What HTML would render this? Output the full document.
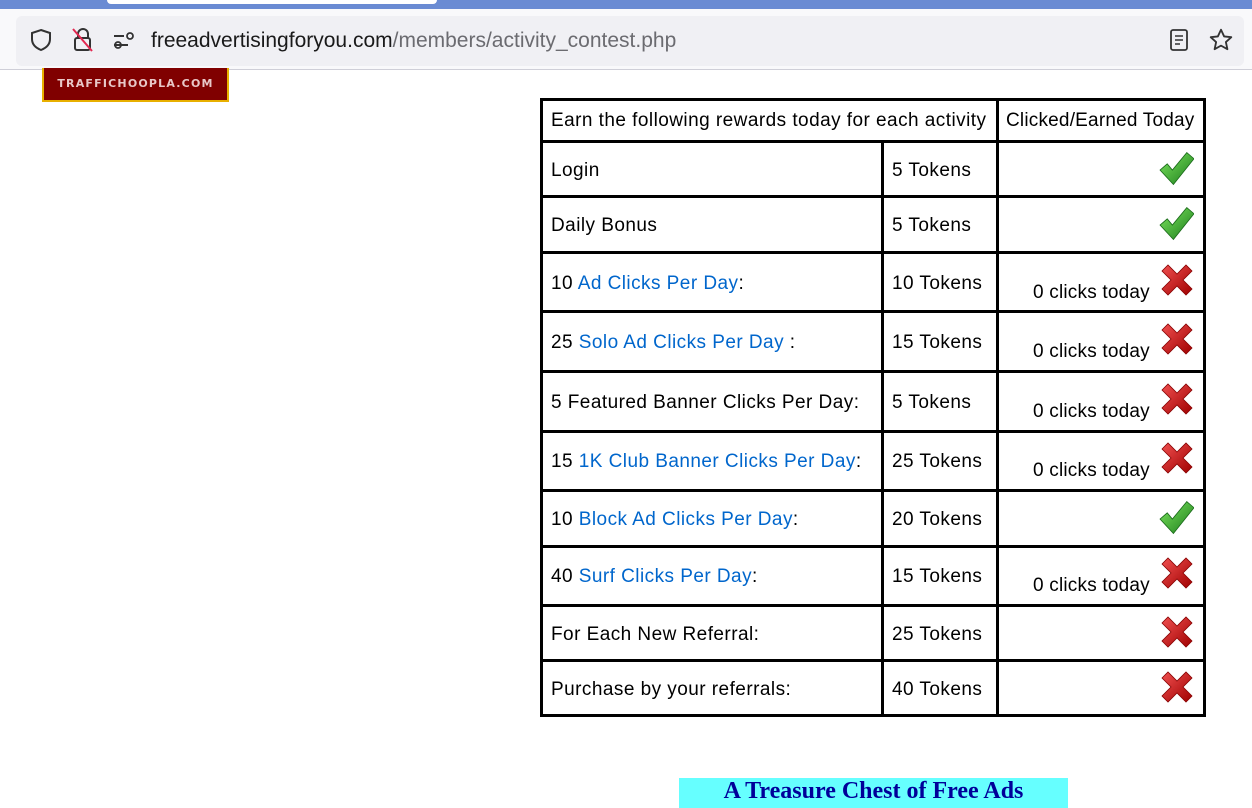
<!DOCTYPE html><html><head><style>
body{margin:0;width:1252px;height:798px;overflow:hidden;background:#fff;font-family:"Liberation Sans",sans-serif;position:relative}
.a{position:absolute}
.t{position:absolute;font-size:19px;color:#000;white-space:nowrap;letter-spacing:0.45px}
.l{color:#0066cc}
.h{position:absolute;background:#000;height:3px;left:540px;width:666px}
.v{position:absolute;background:#000;width:3px}
</style></head><body>
<div class="a" style="left:0;top:0;width:1252px;height:9px;background:#6a8bd3"></div>
<div class="a" style="left:107px;top:0;width:330px;height:4px;background:#fff;border-radius:0 0 4px 4px"></div>
<div class="a" style="left:0;top:9px;width:1252px;height:60px;background:#f9f9fb"></div>
<div class="a" style="left:16px;top:16px;width:1228px;height:50px;background:#f0f0f4;border-radius:6px"></div>
<div class="a" style="left:0;top:69px;width:1252px;height:1px;background:#cfcfd8"></div>
<svg class="a" style="left:28px;top:27px" width="26" height="26" viewBox="0 0 26 26"><path d="M13 3 L22 6 V12 C22 18 18 21 13 23 C8 21 4 18 4 12 V6 Z" fill="none" stroke="#333" stroke-width="2"/></svg>
<svg class="a" style="left:70px;top:26px" width="26" height="28" viewBox="0 0 26 28"><rect x="5" y="12" width="15" height="12" rx="2" fill="none" stroke="#333" stroke-width="2"/><path d="M8 12V8a5 5 0 0 1 10 0v4" fill="none" stroke="#333" stroke-width="2"/><path d="M3 3 L22 25" stroke="#e22850" stroke-width="2"/></svg>
<svg class="a" style="left:112px;top:30px" width="26" height="20" viewBox="0 0 26 20"><path d="M2 6h10M2 15h14" stroke="#333" stroke-width="2"/><circle cx="18" cy="6" r="3" fill="none" stroke="#333" stroke-width="1.8"/><circle cx="6" cy="15" r="3" fill="none" stroke="#333" stroke-width="1.8"/></svg>
<div class="a" style="left:151px;top:29px;font-size:21px;color:#1a1a1a">freeadvertisingforyou.com<span style="color:#6b6b70">/members/activity_contest.php</span></div>
<svg class="a" style="left:1167px;top:28px" width="24" height="24" viewBox="0 0 24 24"><rect x="4" y="2" width="16" height="20" rx="2" fill="none" stroke="#333" stroke-width="1.8"/><path d="M8 8h8M8 12h8M8 16h5" stroke="#333" stroke-width="1.6"/></svg>
<svg class="a" style="left:1208px;top:27px" width="26" height="26" viewBox="0 0 24 24"><path d="M12 2.5l2.9 6.2 6.6.7-5 4.5 1.4 6.6L12 17.2 6.1 20.5l1.4-6.6-5-4.5 6.6-.7z" fill="none" stroke="#333" stroke-width="1.7" stroke-linejoin="round"/></svg>
<div class="a" style="left:42px;top:68px;width:183px;height:32px;background:#800000;border:2px solid #e8b000;border-top:none"></div>
<div class="a" style="left:42px;top:77px;width:187px;text-align:center;color:#e8c8c8;font-family:'DejaVu Sans',sans-serif;font-weight:bold;font-size:11px;letter-spacing:1.2px">TRAFFICHOOPLA.COM</div>

<div class="h" style="top:98px"></div><div class="h" style="top:140px"></div><div class="h" style="top:195px"></div><div class="h" style="top:251px"></div><div class="h" style="top:310px"></div><div class="h" style="top:370px"></div><div class="h" style="top:430px"></div><div class="h" style="top:489px"></div><div class="h" style="top:545px"></div><div class="h" style="top:604px"></div><div class="h" style="top:659px"></div><div class="h" style="top:714px"></div>
<div class="v" style="left:540px;top:98px;height:619px"></div><div class="v" style="left:1203px;top:98px;height:619px"></div>
<div class="v" style="left:996px;top:98px;height:619px"></div><div class="v" style="left:881px;top:140px;height:577px"></div>

<div class="t" style="left:551px;top:110px">Earn the following rewards today for each activity</div>
<div class="t" style="left:1006px;top:110px;letter-spacing:0.2px">Clicked/Earned Today</div>

<svg width="0" height="0" style="position:absolute"><defs>
<linearGradient id="g" x1="0" y1="0" x2="1" y2="1"><stop offset="0" stop-color="#7fe860"/><stop offset="1" stop-color="#1a7a1a"/></linearGradient>
<linearGradient id="r" x1="0" y1="0" x2="1" y2="1"><stop offset="0" stop-color="#f05050"/><stop offset="1" stop-color="#a00000"/></linearGradient>
<symbol id="ck" viewBox="0 0 34 34"><path d="M1 19 L8 13 L13 19 L27 2 L34 8 L14 33 Z" fill="url(#g)" stroke="#1a6a1a" stroke-width="0.8"/></symbol>
<symbol id="x" viewBox="0 0 34 34"><path d="M2 8 L8 2 L17 11 L26 2 L32 8 L23 17 L32 26 L26 32 L17 23 L8 32 L2 26 L11 17 Z" fill="url(#r)" stroke="#800" stroke-width="0.8"/></symbol>
</defs></svg>

<div class="t" style="left:551px;top:160px">Login</div><div class="t" style="left:892px;top:160px">5 Tokens</div>
<svg class="a" style="left:1159px;top:150px" width="35" height="36"><use href="#ck"/></svg>
<div class="t" style="left:551px;top:215px">Daily Bonus</div><div class="t" style="left:892px;top:215px">5 Tokens</div>
<svg class="a" style="left:1159px;top:205px" width="35" height="36"><use href="#ck"/></svg>

<div class="t" style="left:551px;top:273px">10 <span class="l">Ad Clicks Per Day</span>:</div><div class="t" style="left:892px;top:273px">10 Tokens</div>
<div class="t" style="left:1033px;top:282px;letter-spacing:0.2px">0 clicks today</div><svg class="a" style="left:1160px;top:263px" width="34" height="34"><use href="#x"/></svg>

<div class="t" style="left:551px;top:332px">25 <span class="l">Solo Ad Clicks Per Day</span> :</div><div class="t" style="left:892px;top:332px">15 Tokens</div>
<div class="t" style="left:1033px;top:341px;letter-spacing:0.2px">0 clicks today</div><svg class="a" style="left:1160px;top:322px" width="34" height="34"><use href="#x"/></svg>

<div class="t" style="left:551px;top:392px">5 Featured Banner Clicks Per Day:</div><div class="t" style="left:892px;top:392px">5 Tokens</div>
<div class="t" style="left:1033px;top:401px;letter-spacing:0.2px">0 clicks today</div><svg class="a" style="left:1160px;top:382px" width="34" height="34"><use href="#x"/></svg>

<div class="t" style="left:551px;top:451px">15 <span class="l">1K Club Banner Clicks Per Day</span>:</div><div class="t" style="left:892px;top:451px">25 Tokens</div>
<div class="t" style="left:1033px;top:460px;letter-spacing:0.2px">0 clicks today</div><svg class="a" style="left:1160px;top:441px" width="34" height="34"><use href="#x"/></svg>

<div class="t" style="left:551px;top:509px">10 <span class="l">Block Ad Clicks Per Day</span>:</div><div class="t" style="left:892px;top:509px">20 Tokens</div>
<svg class="a" style="left:1159px;top:499px" width="35" height="36"><use href="#ck"/></svg>

<div class="t" style="left:551px;top:566px">40 <span class="l">Surf Clicks Per Day</span>:</div><div class="t" style="left:892px;top:566px">15 Tokens</div>
<div class="t" style="left:1033px;top:575px;letter-spacing:0.2px">0 clicks today</div><svg class="a" style="left:1160px;top:556px" width="34" height="34"><use href="#x"/></svg>

<div class="t" style="left:551px;top:624px">For Each New Referral:</div><div class="t" style="left:892px;top:624px">25 Tokens</div>
<svg class="a" style="left:1160px;top:615px" width="34" height="34"><use href="#x"/></svg>
<div class="t" style="left:551px;top:679px">Purchase by your referrals:</div><div class="t" style="left:892px;top:679px">40 Tokens</div>
<svg class="a" style="left:1160px;top:670px" width="34" height="34"><use href="#x"/></svg>

<div class="a" style="left:679px;top:778px;width:389px;height:30px;background:#66ffff;text-align:center;font-family:'Liberation Serif',serif;font-weight:bold;font-size:24px;color:#000099;line-height:26px">A Treasure Chest of Free Ads</div>
</body></html>
